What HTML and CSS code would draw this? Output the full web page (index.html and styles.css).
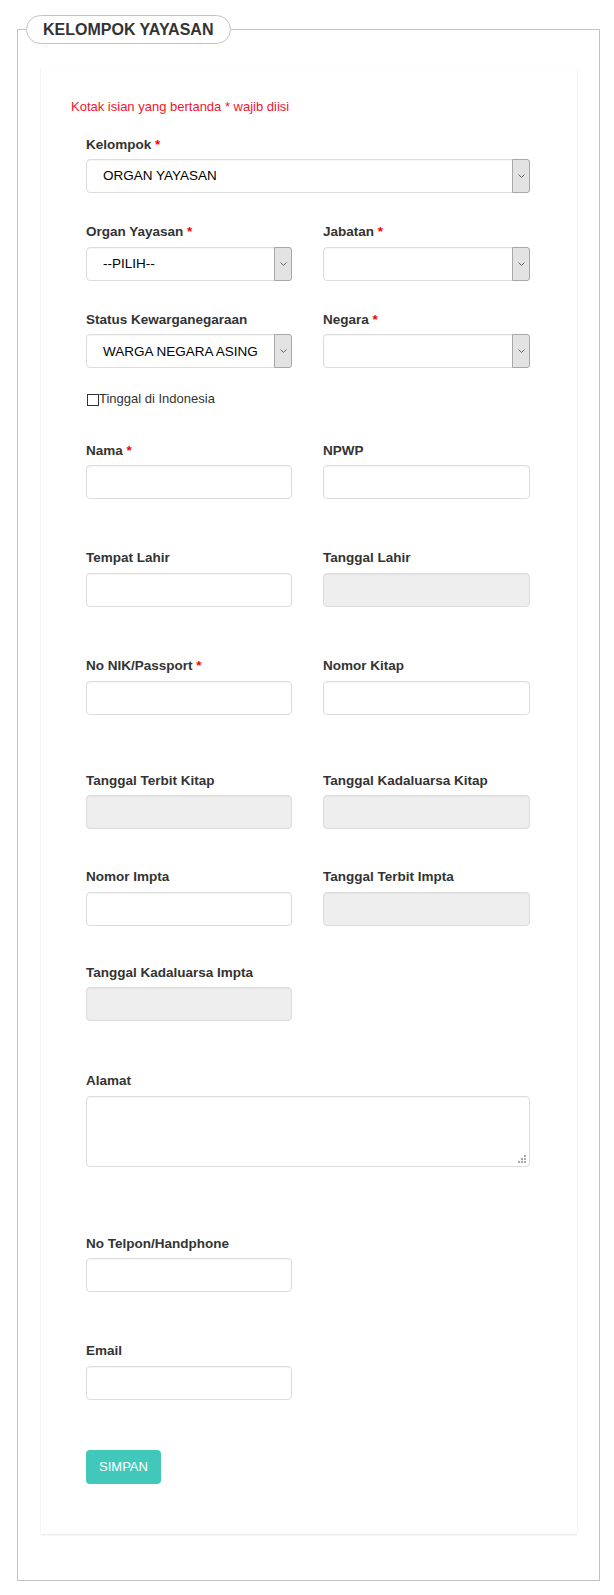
FILE: index.html
```html
<!DOCTYPE html>
<html lang="id">
<head>
  <meta charset="UTF-8" />
  <title>Kelompok Yayasan</title>
  <meta name="viewport" content="width=device-width, initial-scale=1.0"/>
  <link rel="stylesheet" href="styles.css">
</head>
<body>

  <fieldset class="group-box">
    <legend class="group-title">KELOMPOK YAYASAN</legend>

    <div class="panel">
      <p class="note">Kotak isian yang bertanda * wajib diisi</p>

      <form class="form">
        <div class="field mt-19">
          <label class="field-label">Kelompok <span class="req">*</span></label>
          <div class="select-wrap">
            <select class="control select"><option>ORGAN YAYASAN</option></select>
            <span class="select-arrow"><svg width="7" height="4" viewBox="0 0 7 4"><polyline points="0.5,0.5 3.5,3.5 6.5,0.5" fill="none" stroke="#666" stroke-width="1"/></svg></span>
          </div>
        </div>

        <div class="cols mt-30">
          <div class="field">
            <label class="field-label">Organ Yayasan <span class="req">*</span></label>
            <div class="select-wrap">
              <select class="control select"><option>--PILIH--</option></select>
              <span class="select-arrow"><svg width="7" height="4" viewBox="0 0 7 4"><polyline points="0.5,0.5 3.5,3.5 6.5,0.5" fill="none" stroke="#666" stroke-width="1"/></svg></span>
            </div>
          </div>
          <div class="field">
            <label class="field-label">Jabatan <span class="req">*</span></label>
            <div class="select-wrap">
              <select class="control select"><option></option></select>
              <span class="select-arrow"><svg width="7" height="4" viewBox="0 0 7 4"><polyline points="0.5,0.5 3.5,3.5 6.5,0.5" fill="none" stroke="#666" stroke-width="1"/></svg></span>
            </div>
          </div>
        </div>

        <div class="cols mt-30">
          <div class="field">
            <label class="field-label">Status Kewarganegaraan</label>
            <div class="select-wrap">
              <select class="control select"><option>WARGA NEGARA ASING</option></select>
              <span class="select-arrow"><svg width="7" height="4" viewBox="0 0 7 4"><polyline points="0.5,0.5 3.5,3.5 6.5,0.5" fill="none" stroke="#666" stroke-width="1"/></svg></span>
            </div>
          </div>
          <div class="field">
            <label class="field-label">Negara <span class="req">*</span></label>
            <div class="select-wrap">
              <select class="control select"><option></option></select>
              <span class="select-arrow"><svg width="7" height="4" viewBox="0 0 7 4"><polyline points="0.5,0.5 3.5,3.5 6.5,0.5" fill="none" stroke="#666" stroke-width="1"/></svg></span>
            </div>
          </div>
        </div>

        <label class="check mt-22"><input type="checkbox" class="check-box">Tinggal di Indonesia</label>

        <div class="cols mt-33">
          <div class="field">
            <label class="field-label">Nama <span class="req">*</span></label>
            <input type="text" class="control">
          </div>
          <div class="field">
            <label class="field-label">NPWP</label>
            <input type="text" class="control">
          </div>
        </div>

        <div class="cols mt-50">
          <div class="field">
            <label class="field-label">Tempat Lahir</label>
            <input type="text" class="control">
          </div>
          <div class="field">
            <label class="field-label">Tanggal Lahir</label>
            <input type="text" class="control" disabled>
          </div>
        </div>

        <div class="cols mt-50">
          <div class="field">
            <label class="field-label">No NIK/Passport <span class="req">*</span></label>
            <input type="text" class="control">
          </div>
          <div class="field">
            <label class="field-label">Nomor Kitap</label>
            <input type="text" class="control">
          </div>
        </div>

        <div class="cols mt-57">
          <div class="field">
            <label class="field-label">Tanggal Terbit Kitap</label>
            <input type="text" class="control" disabled>
          </div>
          <div class="field">
            <label class="field-label">Tanggal Kadaluarsa Kitap</label>
            <input type="text" class="control" disabled>
          </div>
        </div>

        <div class="cols mt-39">
          <div class="field">
            <label class="field-label">Nomor Impta</label>
            <input type="text" class="control">
          </div>
          <div class="field">
            <label class="field-label">Tanggal Terbit Impta</label>
            <input type="text" class="control" disabled>
          </div>
        </div>

        <div class="cols mt-38">
          <div class="field">
            <label class="field-label">Tanggal Kadaluarsa Impta</label>
            <input type="text" class="control" disabled>
          </div>
        </div>

        <div class="field mt-51">
          <label class="field-label">Alamat</label>
          <div class="textarea-wrap">
            <textarea class="control textarea"></textarea>
            <svg class="grip" width="8" height="8" viewBox="0 0 8 8" fill="#aaa">
              <rect x="6" y="0" width="2" height="2"/>
              <rect x="3" y="3" width="2" height="2"/><rect x="6" y="3" width="2" height="2"/>
              <rect x="0" y="6" width="2" height="2"/><rect x="3" y="6" width="2" height="2"/><rect x="6" y="6" width="2" height="2"/>
            </svg>
          </div>
        </div>

        <div class="cols mt-68">
          <div class="field">
            <label class="field-label">No Telpon/Handphone</label>
            <input type="text" class="control">
          </div>
        </div>

        <div class="cols mt-50">
          <div class="field">
            <label class="field-label">Email</label>
            <input type="text" class="control">
          </div>
        </div>

        <button type="button" class="btn-save mt-50">SIMPAN</button>
      </form>
    </div>
  </fieldset>

</body>
</html>
```

FILE: styles.css
```css
* {
  box-sizing: border-box;
}

body {
  margin: 0;
  font-family: "Liberation Sans", Arial, sans-serif;
  font-size: 13px;
  line-height: 1.42857;
  color: #333;
  background: #fff;
}

.group-box {
  margin: 15px 14px 0 17px;
  padding: 0;
  min-width: 0;
  border: 1px solid #c3c3c3;
}

.group-title {
  margin-left: 8px;
  padding: 5px 17px 5px 16px;
  border: 1px solid #c3c3c3;
  border-radius: 15px;
  background: #fff;
  font-size: 16px;
  font-weight: bold;
  line-height: 17px;
  color: #333;
}

.panel {
  margin: 24px 22px 46px 23px;
  padding: 30px 30px 50px;
  background: #fff;
  box-shadow: 0 1px 2px rgba(0,0,0,0.1), 0 0 1px rgba(0,0,0,0.06);
}

.note {
  margin: 0;
  color: #f3142c;
}

.form {
  padding: 0 17px 0 15px;
}

.cols {
  display: grid;
  grid-template-columns: 206px 1fr;
  column-gap: 31px;
}

.field-label {
  display: block;
  margin-bottom: 5px;
  font-size: 13.5px;
  line-height: 18.57px;
  font-weight: bold;
  color: #333;
}

.req {
  color: #f00;
}

.control {
  display: block;
  width: 100%;
  height: 34px;
  margin: 0;
  padding: 6px 12px;
  border: 1px solid #dcdcdc;
  border-radius: 4px;
  background: #fff;
  box-shadow: inset 0 1px 1px rgba(0,0,0,0.04);
  font: inherit;
  color: #000;
}

.control:disabled {
  background: #eee;
}

.textarea-wrap {
  position: relative;
}

.textarea {
  height: 71px;
  resize: none;
}

.grip {
  position: absolute;
  right: 4px;
  bottom: 4px;
}

.select-wrap {
  position: relative;
}

.select {
  appearance: none;
  -webkit-appearance: none;
  padding-left: 16px;
  padding-right: 24px;
  font-size: 13.5px;
}

.select-arrow {
  position: absolute;
  top: 0;
  right: 0;
  bottom: 0;
  width: 18px;
  display: flex;
  align-items: center;
  justify-content: center;
  background: #e3e3e3;
  border: 1px solid #a8a8a8;
  border-radius: 0 3px 3px 0;
  pointer-events: none;
}

.check {
  display: flex;
  align-items: center;
  color: #333;
}

.check-box {
  appearance: none;
  -webkit-appearance: none;
  width: 12px;
  height: 12px;
  margin: 0 0 0 1px;
  border: 1px solid #333;
  border-radius: 0;
  background: #fff;
}

.btn-save {
  display: block;
  width: 75px;
  height: 34px;
  padding: 0;
  border: none;
  border-radius: 4px;
  background: #41c8bb;
  color: #fff;
  font-family: "Liberation Sans", Arial, sans-serif;
  font-size: 13px;
  cursor: pointer;
}

.mt-19 { margin-top: 19px; }
.mt-22 { margin-top: 22px; }
.mt-30 { margin-top: 30px; }
.mt-33 { margin-top: 33px; }
.mt-38 { margin-top: 38px; }
.mt-39 { margin-top: 39px; }
.mt-50 { margin-top: 50px; }
.mt-51 { margin-top: 51px; }
.mt-57 { margin-top: 57px; }
.mt-68 { margin-top: 68px; }
```
